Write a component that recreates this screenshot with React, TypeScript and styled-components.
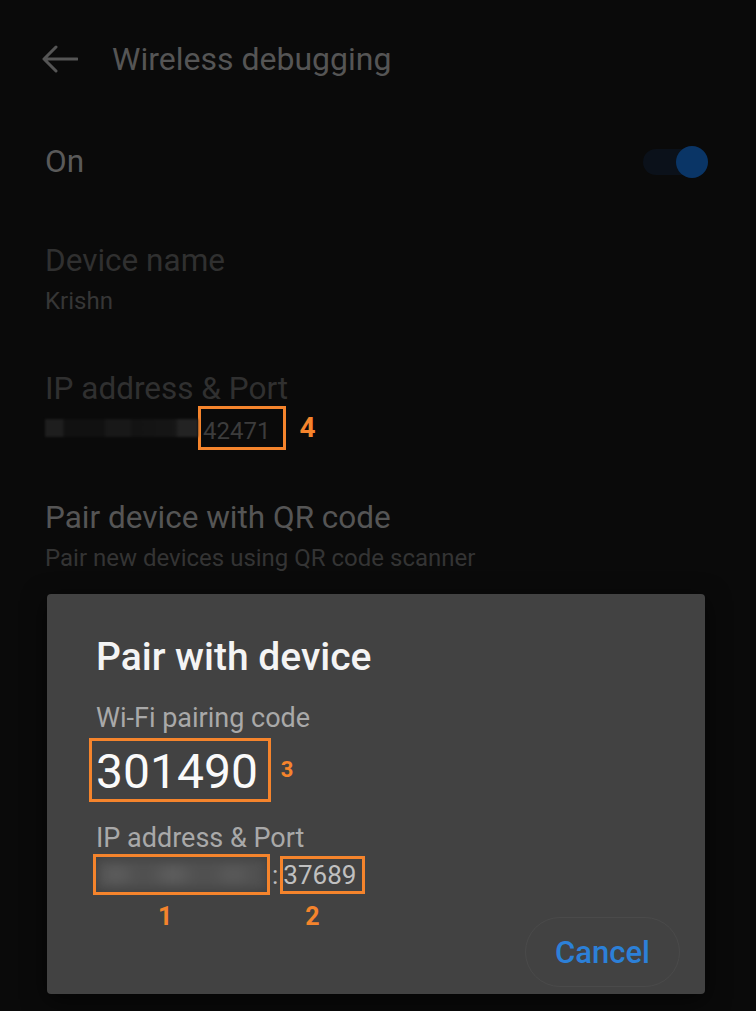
import React from 'react';
import styled, { createGlobalStyle } from 'styled-components';

const ORANGE = '#f5842c';

const Global = createGlobalStyle`
  html, body { margin: 0; padding: 0; background: #0a0a0a; }
  body { font-family: Roboto, "Noto Sans", "Liberation Sans", sans-serif; }
  * { box-sizing: border-box; }
`;

const Screen = styled.div`
  position: relative;
  width: 756px;
  height: 1011px;
  overflow: hidden;
  background: #0a0a0a;
`;

const Header = styled.header`
  height: 118px;
  display: flex;
  align-items: center;
  gap: 34px;
  padding-left: 42px;
`;

const Title = styled.h1`
  margin: 0;
  font-size: 32px;
  font-weight: 400;
  line-height: 40px;
  color: #555555;
`;

const SwitchRow = styled.div`
  height: 88px;
  display: flex;
  align-items: center;
  justify-content: space-between;
  padding: 0 48px 0 45px;
`;

const RowLabel = styled.span`
  font-size: 31.5px;
  line-height: 38px;
  color: #5a5a5a;
`;

const Toggle = styled.div`
  position: relative;
  width: 65px;
  height: 32px;
`;

const Track = styled.span`
  position: absolute;
  left: 0;
  top: 3px;
  width: 52px;
  height: 26px;
  border-radius: 13px;
  background: #0b111a;
`;

const Thumb = styled.span`
  position: absolute;
  right: 0;
  top: 0;
  width: 32px;
  height: 32px;
  border-radius: 50%;
  background: #0a3566;
`;

const Item = styled.div<{ $pt: number; $pb: number }>`
  padding: ${p => p.$pt}px 45px ${p => p.$pb}px;
`;

const ItemTitle = styled.div<{ $tone: string }>`
  font-size: 31.5px;
  line-height: 38px;
  color: ${p => p.$tone};
`;

const ItemSub = styled.div<{ $tone: string }>`
  margin-top: 6px;
  font-size: 24px;
  line-height: 30px;
  color: ${p => p.$tone};
`;

const ValueRow = styled.div`
  display: flex;
  align-items: center;
  margin-top: -2px;
`;

const HiddenAddr = styled.span`
  width: 153px;
  height: 18px;
  background: linear-gradient(
    90deg,
    #1e1e1e 0,
    #1e1e1e 17px,
    #111 20px,
    #111 58px,
    #181818 62px,
    #181818 84px,
    #131313 88px,
    #161616 130px,
    #232323 134px,
    #232323 153px
  );
  filter: blur(1px);
`;

const OutlineBox = styled.span<{ $pad: string }>`
  display: inline-flex;
  align-items: center;
  border: 3px solid ${ORANGE};
  padding: ${p => p.$pad};
`;

const ValueText = styled.span<{ $size: number; $tone: string }>`
  font-size: ${p => p.$size}px;
  line-height: 32px;
  color: ${p => p.$tone};
`;

const Mark = styled.span<{ $size: number; $ml?: number }>`
  margin-left: ${p => p.$ml ?? 0}px;
  font-size: ${p => p.$size}px;
  line-height: 28px;
  font-weight: 700;
  color: ${ORANGE};
`;

const Dialog = styled.section`
  position: absolute;
  left: 47px;
  top: 594px;
  width: 658px;
  padding: 40px 25px 7px 49px;
  background: #424242;
  border-radius: 4px;
  box-shadow: 0 6px 24px rgba(0, 0, 0, 0.6);
`;

const DialogTitle = styled.h2`
  margin: 0;
  font-size: 39px;
  font-weight: 500;
  line-height: 46px;
  color: #f4f4f4;
`;

const FieldLabel = styled.div<{ $mt: number }>`
  margin-top: ${p => p.$mt}px;
  font-size: 27px;
  line-height: 32px;
  color: #a9a9a9;
`;

const CodeRow = styled.div`
  display: flex;
  align-items: center;
  gap: 10px;
  margin: 4px 0 0 -7px;
`;

const CodeBox = styled.span`
  border: 3px solid ${ORANGE};
  padding: 4px 10px 0 4px;
  font-size: 48px;
  line-height: 54px;
  color: #fafafa;
`;

const AddrRow = styled.div`
  display: flex;
  align-items: center;
  margin-left: -3px;
`;

const BlurBox = styled.span`
  position: relative;
  width: 177px;
  height: 41px;
  border: 3px solid ${ORANGE};
  overflow: hidden;
`;

const BlurFill = styled.span`
  position: absolute;
  inset: 3px 2px;
  background:
    radial-gradient(ellipse 22px 14px at 18px 50%, #5e5e5e, transparent),
    radial-gradient(ellipse 24px 14px at 75px 50%, #606060, transparent),
    radial-gradient(ellipse 22px 14px at 135px 50%, #5b5b5b, transparent),
    #505050;
  filter: blur(4px);
`;

const Colon = styled.span`
  margin: 0 2px;
  font-size: 26px;
  line-height: 32px;
  color: #bdbdbd;
`;

const MarkRow = styled.div`
  display: flex;
  margin-top: 8px;
`;

const Actions = styled.div`
  display: flex;
  justify-content: flex-end;
  margin-top: -14px;
`;

const CancelButton = styled.button`
  width: 155px;
  height: 70px;
  border-radius: 35px;
  border: 1px solid #4a4a4a;
  background: transparent;
  font-family: inherit;
  font-size: 31px;
  font-weight: 500;
  color: #2c80d8;
  padding: 0;
`;

const BackArrow = () => (
  <svg width="36" height="28" viewBox="0 0 36 28" fill="none">
    <path
      d="M35 14H2M14 2L2 14l12 12"
      stroke="#555"
      strokeWidth="3"
      strokeLinecap="round"
      strokeLinejoin="round"
    />
  </svg>
);

export default function App() {
  return (
    <Screen>
      <Global />
      <Header>
        <BackArrow />
        <Title>Wireless debugging</Title>
      </Header>

      <SwitchRow>
        <RowLabel>On</RowLabel>
        <Toggle>
          <Track />
          <Thumb />
        </Toggle>
      </SwitchRow>

      <Item $pt={36} $pb={27}>
        <ItemTitle $tone="#303030">Device name</ItemTitle>
        <ItemSub $tone="#363636">Krishn</ItemSub>
      </Item>

      <Item $pt={27} $pb={22}>
        <ItemTitle $tone="#303030">IP address &amp; Port</ItemTitle>
        <ValueRow>
          <HiddenAddr />
          <OutlineBox $pad="6px 13px 0 2px">
            <ValueText $size={24} $tone="#3c3c3c">42471</ValueText>
          </OutlineBox>
          <Mark $size={28} $ml={13}>4</Mark>
        </ValueRow>
      </Item>

      <Item $pt={27} $pb={27}>
        <ItemTitle $tone="#555555">Pair device with QR code</ItemTitle>
        <ItemSub $tone="#343434">Pair new devices using QR code scanner</ItemSub>
      </Item>

      <Dialog>
        <DialogTitle>Pair with device</DialogTitle>
        <FieldLabel $mt={22}>Wi-Fi pairing code</FieldLabel>
        <CodeRow>
          <CodeBox>301490</CodeBox>
          <Mark $size={22}>3</Mark>
        </CodeRow>
        <FieldLabel $mt={20}>IP address &amp; Port</FieldLabel>
        <AddrRow>
          <BlurBox>
            <BlurFill />
          </BlurBox>
          <Colon>:</Colon>
          <OutlineBox $pad="0 6px 0 0">
            <ValueText $size={26} $tone="#c0c0c0">37689</ValueText>
          </OutlineBox>
        </AddrRow>
        <MarkRow>
          <Mark $size={25} $ml={62}>1</Mark>
          <Mark $size={25} $ml={133}>2</Mark>
        </MarkRow>
        <Actions>
          <CancelButton>Cancel</CancelButton>
        </Actions>
      </Dialog>
    </Screen>
  );
}
